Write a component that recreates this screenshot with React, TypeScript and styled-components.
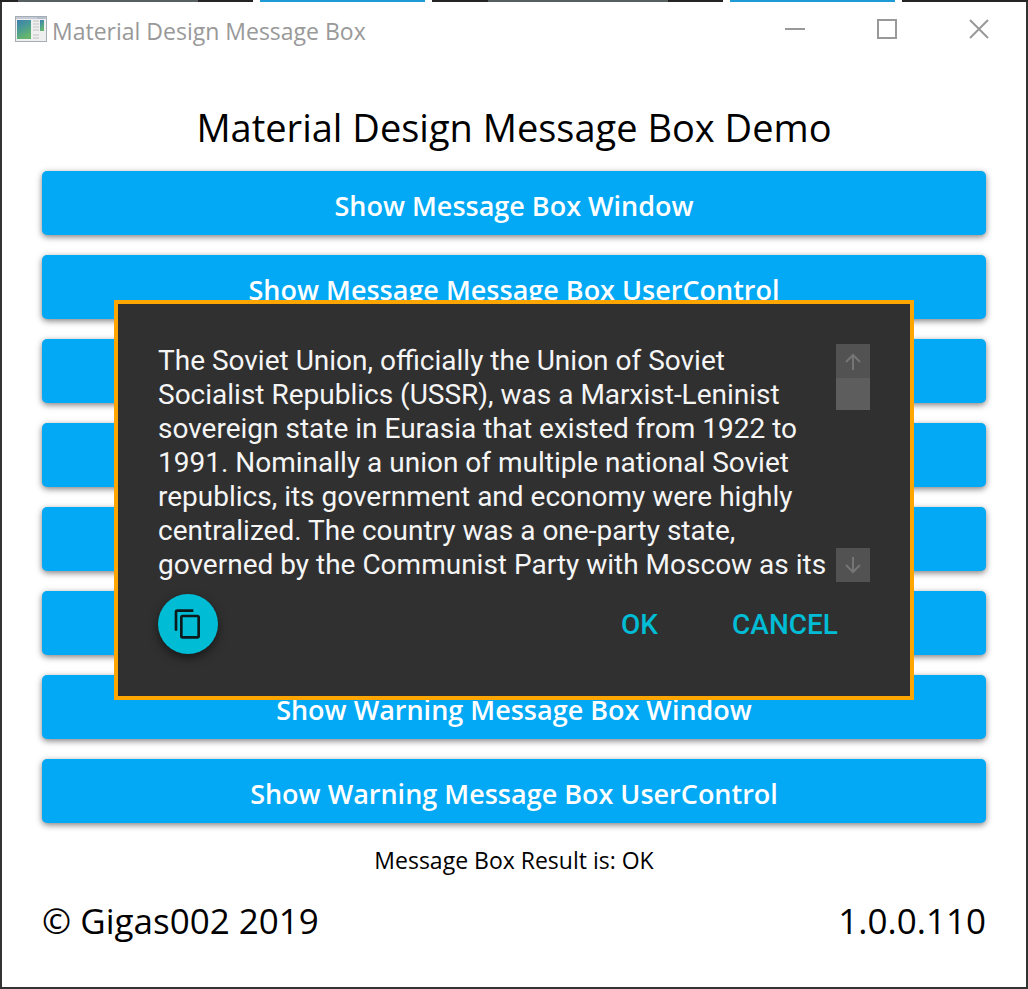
import React from "react";
import styled, { createGlobalStyle } from "styled-components";

const GlobalStyle = createGlobalStyle`
  *, *::before, *::after { box-sizing: border-box; }
  body { margin: 0; background: #333333; }
  button { font: inherit; border: 0; padding: 0; cursor: pointer; }
`;

const Window = styled.div`
  position: relative;
  display: flex;
  flex-direction: column;
  min-height: 100vh;
  border: 2px solid #333333;
  background: #ffffff;
  color: #000000;
  font-family: "Open Sans", "Noto Sans", sans-serif;
`;

const BackdropEdge = styled.div`
  position: absolute;
  top: -2px;
  left: -2px;
  right: -2px;
  height: 2px;
  background: linear-gradient(
    to right,
    #262324 18px, #575f60 18px 198px, #262324 198px 253px,
    #ffffff 253px 260px, #1e9bd7 260px 425px, #ffffff 425px 432px,
    #262324 432px 488px, #575f60 488px 668px, #262324 668px 723px,
    #ffffff 723px 730px, #1e9bd7 730px 895px, #ffffff 895px 902px,
    #262324 902px
  );
`;

const TitleBar = styled.header`
  display: flex;
  align-items: center;
  height: 54px;
  padding: 0 1px 0 13px;
  color: #999999;
`;

const AppIcon = styled.svg`
  width: 32px;
  height: 26px;
  margin-right: 5px;
`;

const WindowTitle = styled.span`
  flex: 1;
  padding-top: 4px;
  font-size: 23px;
  line-height: 32px;
  white-space: nowrap;
`;

const CaptionButton = styled.button`
  display: grid;
  place-items: center;
  width: 92px;
  height: 54px;
  background: transparent;
  color: inherit;
`;

const Content = styled.main`
  display: flex;
  flex-direction: column;
  flex: 1;
  padding: 43px 40px 40px;
`;

const Heading = styled.h1`
  margin: 0 0 16px;
  font-size: 38px;
  font-weight: 400;
  line-height: 56px;
  text-align: center;
`;

const ButtonStack = styled.div`
  display: flex;
  flex-direction: column;
  gap: 20px;
`;

const DemoButton = styled.button`
  height: 64px;
  padding-top: 4px;
  border-radius: 5px;
  background: #03a9f4;
  box-shadow: 0 2px 6px rgba(0, 0, 0, 0.5);
  color: #ffffff;
  && {
    font-size: 27px;
    font-weight: 600;
  }
`;

const Result = styled.p`
  margin: 19px 0 0;
  font-size: 23px;
  line-height: 36px;
  text-align: center;
`;

const Footer = styled.footer`
  display: flex;
  justify-content: space-between;
  margin-top: 19px;
  font-size: 35px;
  line-height: 48px;
`;

const Overlay = styled.div`
  position: absolute;
  inset: 0;
  display: flex;
  align-items: center;
  justify-content: center;
  padding-top: 11px;
`;

const Dialog = styled.section`
  width: 100%;
  max-width: 800px;
  padding: 40px;
  border: 4px solid #ffa500;
  background: #303030;
  color: #f5f5f5;
  font-family: Roboto, sans-serif;
  font-size: 28px;
`;

const MessageArea = styled.div`
  display: flex;
  height: 238px;
`;

const Message = styled.p`
  flex: 1;
  margin: 0;
  overflow: hidden;
  line-height: 34px;
`;

const ScrollBar = styled.div`
  display: flex;
  flex-direction: column;
  width: 34px;
`;

const ScrollButton = styled.button`
  display: grid;
  place-items: center;
  height: 34px;
  background: #525252;
  color: #757575;
`;

const ScrollTrack = styled.div`
  flex: 1;
`;

const ScrollThumb = styled.div`
  height: 32px;
  background: #5d5d5d;
`;

const Actions = styled.div`
  display: flex;
  align-items: center;
  gap: 10px;
  margin-top: 10px;
`;

const CopyButton = styled.button`
  display: grid;
  place-items: center;
  width: 60px;
  height: 60px;
  margin-right: auto;
  border-radius: 50%;
  background: #00bcd4;
  box-shadow: 0 4px 10px rgba(0, 0, 0, 0.5);
  color: #0c1a1c;
`;

const FlatButton = styled.button`
  height: 64px;
  background: transparent;
  color: #00bcd4;
  && {
    padding: 0 32px;
    font-weight: 500;
  }
`;

const demoButtons = [
  "Show Message Box Window",
  "Show Message Message Box UserControl",
  "",
  "",
  "",
  "",
  "Show Warning Message Box Window",
  "Show Warning Message Box UserControl",
];

function ArrowIcon({ down = false }: { down?: boolean }) {
  return (
    <svg width="16" height="18" viewBox="0 0 16 18" fill="none" stroke="currentColor" strokeWidth="2">
      <path d={down ? "M8 1V16M1 9L8 16L15 9" : "M8 18V3M1 10L8 3L15 10"} />
    </svg>
  );
}

export default function App() {
  return (
    <>
      <GlobalStyle />
      <Window>
        <BackdropEdge />
        <TitleBar>
          <AppIcon viewBox="0 0 32 26">
            <defs>
              <linearGradient id="pane" x1="0" y1="0" x2="0.4" y2="1">
                <stop offset="0" stopColor="#3d7fb0" />
                <stop offset="0.5" stopColor="#4a9c94" />
                <stop offset="1" stopColor="#66b56c" />
              </linearGradient>
            </defs>
            <rect x="0.5" y="0.5" width="31" height="25" fill="#efefef" stroke="#a5acb3" />
            <path d="M1 2H31" stroke="#c3ccd6" strokeWidth="2" />
            <path d="M22 2H30" stroke="#9fb0c4" />
            <rect x="2" y="4" width="14" height="19" fill="url(#pane)" />
            <path d="M18 5H24M18 8H24M18 11H24M18 14H24M18 19H24M18 22H24" stroke="#c2c2c2" />
            <rect x="25" y="4" width="4" height="11" fill="url(#pane)" />
          </AppIcon>
          <WindowTitle>Material Design Message Box</WindowTitle>
          <CaptionButton aria-label="Minimize">
            <svg width="20" height="20" viewBox="0 0 20 20" stroke="currentColor" strokeWidth="2">
              <path d="M0 10H20" />
            </svg>
          </CaptionButton>
          <CaptionButton aria-label="Maximize">
            <svg width="20" height="20" viewBox="0 0 20 20" fill="none" stroke="currentColor" strokeWidth="2">
              <rect x="1" y="1" width="18" height="18" />
            </svg>
          </CaptionButton>
          <CaptionButton aria-label="Close">
            <svg width="20" height="20" viewBox="0 0 20 20" stroke="currentColor" strokeWidth="2">
              <path d="M1 1L19 19M19 1L1 19" />
            </svg>
          </CaptionButton>
        </TitleBar>
        <Content>
          <Heading>Material Design Message Box Demo</Heading>
          <ButtonStack>
            {demoButtons.map((label, index) => (
              <DemoButton key={index}>{label}</DemoButton>
            ))}
          </ButtonStack>
          <Result>Message Box Result is: OK</Result>
          <Footer>
            <span>© Gigas002 2019</span>
            <span>1.0.0.110</span>
          </Footer>
        </Content>
        <Overlay>
          <Dialog role="dialog" aria-modal="true">
            <MessageArea>
              <Message>
                The Soviet Union, officially the Union of Soviet Socialist Republics (USSR), was a
                Marxist-Leninist sovereign state in Eurasia that existed from 1922 to 1991. Nominally
                a union of multiple national Soviet republics, its government and economy were highly
                centralized. The country was a one-party state, governed by the Communist Party with
                Moscow as its
              </Message>
              <ScrollBar>
                <ScrollButton aria-label="Scroll up">
                  <ArrowIcon />
                </ScrollButton>
                <ScrollTrack>
                  <ScrollThumb />
                </ScrollTrack>
                <ScrollButton aria-label="Scroll down">
                  <ArrowIcon down />
                </ScrollButton>
              </ScrollBar>
            </MessageArea>
            <Actions>
              <CopyButton aria-label="Copy">
                <svg width="32" height="32" viewBox="0 0 24 24" fill="currentColor">
                  <path d="M19 21H8V7H19M19 5H8A2 2 0 0 0 6 7V21A2 2 0 0 0 8 23H19A2 2 0 0 0 21 21V7A2 2 0 0 0 19 5M16 1H4A2 2 0 0 0 2 3V17H4V3H16V1Z" />
                </svg>
              </CopyButton>
              <FlatButton>OK</FlatButton>
              <FlatButton>CANCEL</FlatButton>
            </Actions>
          </Dialog>
        </Overlay>
      </Window>
    </>
  );
}
